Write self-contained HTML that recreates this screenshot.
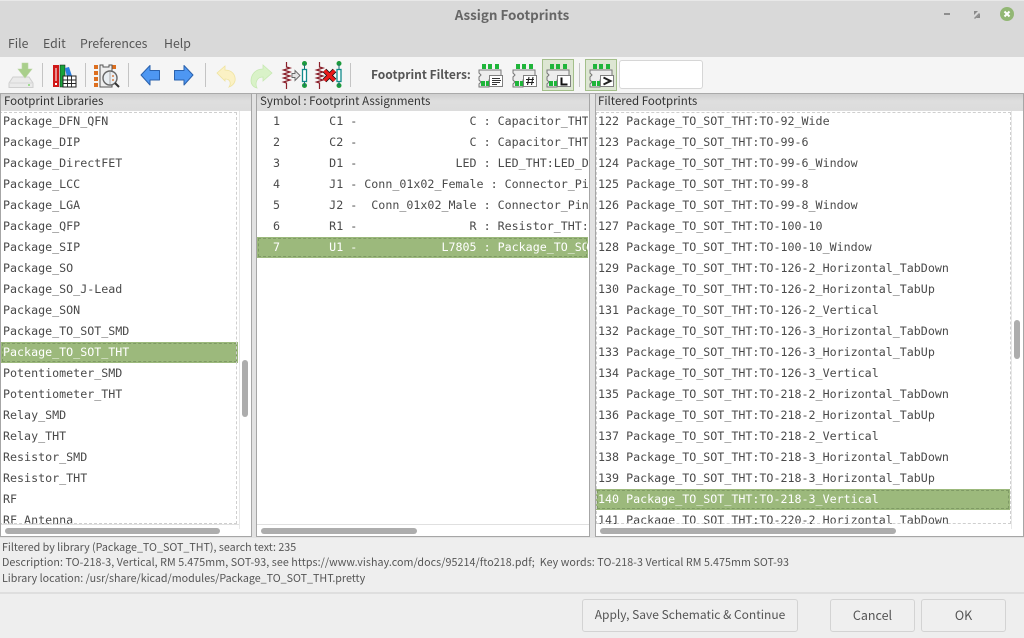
<!DOCTYPE html>
<html><head><meta charset="utf-8">
<style>
html,body{margin:0;padding:0;background:#eee;}
#r{position:relative;width:1024px;height:638px;overflow:hidden;background:#eeeeee;font-family:"Noto Sans CJK JP","Liberation Sans",sans-serif;color:#4d4d4d;}
.a{position:absolute;}
.t{position:absolute;white-space:pre;line-height:16px;}
.ui{font-size:12.3px;color:#555;}
.panel{position:absolute;top:94px;height:443px;background:#fff;border:1px solid #a6a6a6;border-top:0;box-sizing:border-box;overflow:hidden;}
.hd{position:absolute;left:0;right:0;top:0;height:17px;background:linear-gradient(#cfcfcf,#dedede 40%,#dcdcdc);font-size:11.5px;line-height:14px;color:#333;padding-left:3px;white-space:pre;}
.list{position:absolute;top:17px;left:0;height:413px;overflow:hidden;font-family:"DejaVu Sans Mono","Liberation Mono",monospace;font-size:11.67px;color:#4a4a4a;}
.row{position:absolute;left:0;right:0;height:21px;line-height:21px;white-space:pre;padding-left:2px;}
.sel{background:#9cb97c;color:#fff;}
.sel:after{content:"";position:absolute;left:1px;right:1px;top:1px;bottom:1px;border:1px dashed #7f9a65;}
.dash{position:absolute;border:1px dashed #cfcfcf;box-sizing:border-box;pointer-events:none;}
.sb{position:absolute;background:#adadad;border-radius:3px;}
.btn{position:absolute;top:599px;height:33px;border:1px solid #d3d3d3;border-radius:3px;background:#efefef;box-sizing:border-box;text-align:center;font-size:12.5px;line-height:29px;color:#555;}
.sep{position:absolute;top:63px;width:1px;height:24px;background:#c4c4c4;}
</style></head><body>
<div id="r">
<div class="a" style="left:0;top:0;width:1024px;height:57px;background:#d9d9d9;"></div>
<div class="a" style="left:0;top:0;width:1024px;height:1px;background:#e8e8e8;"></div>
<div class="t" style="left:0;width:1024px;text-align:center;top:6px;font-size:13.4px;font-weight:bold;color:#666;">Assign Footprints</div>
<svg class="a" style="left:940px;top:0" width="84" height="30" viewBox="0 0 84 30">
<rect x="4" y="13" width="6" height="2" fill="#8e8e8e"/>
<path d="M34 14v-3h3zM40 14l-5 5-1-1 5-5zM40 14v4h-3z" fill="#8e8e8e"/>
<path d="M34 11h4l-4 4zM40 18h-4l4-4z" fill="#8a8a8a"/>
<circle cx="67" cy="14" r="7" fill="#92b774"/>
<path d="M64.5 11.500l5 5M69.500 11.500l-5 5" stroke="#fff" stroke-width="2"/>
</svg>
<div class="t ui" style="left:8px;top:35px;">File</div>
<div class="t ui" style="left:43px;top:35px;">Edit</div>
<div class="t ui" style="left:80px;top:35px;">Preferences</div>
<div class="t ui" style="left:164px;top:35px;">Help</div>

<div class="a" style="left:0;top:57px;width:1024px;height:36px;background:#f5f5f5;"></div>
<div class="a" style="left:0;top:93px;width:1024px;height:1px;background:#aaa;"></div>
<div class="sep" style="left:42px"></div><div class="sep" style="left:85px"></div><div class="sep" style="left:128px"></div><div class="sep" style="left:205px"></div><div class="sep" style="left:350px"></div><div class="sep" style="left:579px"></div>

<div class="a" style="left:542px;top:59px;width:32px;height:32px;box-sizing:border-box;background:#dde6d3;border:1px solid #a3bf8a;"></div>
<div class="a" style="left:585px;top:59px;width:32px;height:32px;box-sizing:border-box;background:#dde6d3;border:1px solid #a3bf8a;"></div>
<div class="a" style="left:619px;top:60px;width:84px;height:29px;box-sizing:border-box;background:#fff;border:1px solid #d6d6d6;border-radius:3px;"></div>
<div class="t" style="left:371px;top:67px;font-size:12px;font-weight:bold;color:#555;">Footprint Filters:</div>

<svg class="a" style="left:0;top:57px" width="620" height="36" viewBox="0 57 620 36">
<defs>
<g id="fp">
<path d="M1 7h22v10H11v7H1v-3l2-2-2-2v-3l2-2-2-2z" fill="#ededed" stroke="#777" stroke-width="1"/>
<rect x="4" y="1" width="4" height="5" fill="#1fb53a"/><rect x="10" y="1" width="4" height="5" fill="#1fb53a"/><rect x="17" y="1" width="4" height="5" fill="#1fb53a"/>
<rect x="3" y="18" width="4" height="5" fill="#1fb53a"/><rect x="8" y="18" width="3" height="5" fill="#1fb53a"/>
<rect x="11.500" y="12.500" width="13" height="11" fill="#fff" stroke="#808080"/>
</g>
</defs>
<!-- save -->
<path d="M13 77l-4 6v4.500h24V83l-4-6z" fill="#eaeaea" stroke="#cfcfcf"/>
<path d="M10 83h22" stroke="#d5d5d5"/>
<rect x="28" y="84" width="2" height="2" fill="#9fdc90"/>
<path d="M23 63h6v6h4l-7 9-7-9h4z" fill="#a9cf8b" stroke="#b9d5a2" stroke-width=".6" transform="translate(-1,0)"/>
<!-- library -->
<rect x="53" y="65" width="6" height="22" fill="#d01818"/>
<rect x="55.500" y="68" width="1" height="13" fill="#fff"/><rect x="55" y="83" width="2" height="2" fill="#fff"/>
<rect x="60" y="65" width="5" height="22" fill="#19a33a" stroke="#111" stroke-width=".5"/>
<path d="M65 68l4-1 3 9-5 1z" fill="#2a7fe0"/>
<rect x="63" y="76" width="13" height="11" fill="#fff" stroke="#222"/>
<path d="M63 80h13M63 83.500h13M67.500 76v11M71.500 76v11" stroke="#222" stroke-width=".9"/>
<!-- netlist -->
<g fill="#dd6f1f"><rect x="94" y="65" width="4" height="4"/><rect x="94" y="71" width="4" height="4"/><rect x="94" y="77" width="4" height="4"/><rect x="94" y="83" width="4" height="4"/><rect x="112" y="65" width="4" height="4"/></g>
<path d="M100 65h3v2h6v-2h3v22h-12z" fill="#eee" stroke="#555"/>
<circle cx="110" cy="78" r="7" fill="#e9eef2" stroke="#666" stroke-width="1.400"/>
<path d="M110 72v12" stroke="#aaa"/>
<rect x="112" y="75" width="2" height="2" fill="#dd9a6f"/><rect x="112" y="79" width="2" height="2" fill="#dd9a6f"/>
<path d="M115 83l4 4" stroke="#333" stroke-width="2"/>
<!-- arrows -->
<path d="M141 75l9-9.500v5h9.500v9.500H150v5z" fill="#4e97f2" stroke="#2b62ad" stroke-linejoin="round"/>
<path d="M193 75l-9-9.500v5h-9.500v9.500H184v5z" fill="#4e97f2" stroke="#2b62ad" stroke-linejoin="round"/>
<!-- undo/redo -->
<path d="M217 73l8-7v4c7 0 11 5 10 11-1 3-3 5-6 6 2-3 2-8-4-8v2z" fill="#fbf1c4" stroke="#efe39f" stroke-width=".8"/>
<path d="M272 73l-9-8v4c-8 0-12 6-12 12 0 3 2 6 6 7-2-4-1-11 6-11v4z" fill="#d9f2c8" stroke="#c6e8b1" stroke-width=".8"/>
<!-- assign -->
<path d="M286.500 62v5l3.500 1-6.500 2 6.500 2-6.500 2 6.500 2-6.500 2 6.500 2-6.500 2 3 1v6" fill="none" stroke="#8a1f2a" stroke-width="1.200"/>
<path d="M292 73.500h3v-3l5 5-5 5v-3h-3z" fill="#e4e4e4" stroke="#666" stroke-width=".9"/>
<circle cx="304.500" cy="63.500" r="2.500" fill="#1c9a3c"/><circle cx="304.500" cy="85.500" r="2.500" fill="#1c9a3c"/>
<path d="M304.500 64v22" stroke="#1c6f6f"/>
<rect x="302.500" y="69.500" width="4" height="12" fill="#fff" stroke="#118a8a" stroke-width="1.300"/>
<!-- unassign -->
<path d="M319.500 62v5l3.500 1-6.500 2 6.500 2-6.500 2 6.500 2-6.500 2 6.500 2-6.500 2 3 1v6" fill="none" stroke="#8a1f2a" stroke-width="1.200"/>
<circle cx="339" cy="63.500" r="2.500" fill="#1c9a3c"/><circle cx="339" cy="85.500" r="2.500" fill="#1c9a3c"/>
<path d="M339 64v22" stroke="#1c6f6f"/>
<rect x="337" y="69.500" width="4" height="12" fill="#fff" stroke="#118a8a" stroke-width="1.300"/>
<path d="M324.500 70.500l10 10M334.500 70.500l-10 10" stroke="#111" stroke-width="5"/>
<path d="M324.500 70.500l10 10M334.500 70.500l-10 10" stroke="#ea1a1a" stroke-width="3.400"/>
<!-- fp filters -->
<g transform="translate(478,63)"><use href="#fp"/><path d="M14 15.500h8M14 17.500h9M14 19.500h8M14 21.500h5" stroke="#333" stroke-width=".9"/></g>
<g transform="translate(512,63)"><use href="#fp"/><path d="M15.500 22l1.500-8M19.500 22l1.500-8M14 16.500h8M14 19.500h8" stroke="#222" stroke-width="1.100" fill="none"/></g>
<g transform="translate(546,63)"><use href="#fp"/><path d="M15.500 14.500v7h6" stroke="#111" stroke-width="2" fill="none"/></g>
<g transform="translate(589,63)"><use href="#fp"/><path d="M14.500 14.500l7 3.500-7 3.500" stroke="#222" stroke-width="2" fill="none"/></g>
</svg>

<!-- splitter bg -->
<div class="a" style="left:0;top:94px;width:1024px;height:444px;background:#e2e2e2;"></div>

<!-- LEFT -->
<div class="panel" style="left:0;width:252px;">
<div class="hd">Footprint Libraries</div>
<div class="list" style="width:237px;">
<div class="row" style="top:0px;">Package_DFN_QFN</div>
<div class="row" style="top:21px;">Package_DIP</div>
<div class="row" style="top:42px;">Package_DirectFET</div>
<div class="row" style="top:63px;">Package_LCC</div>
<div class="row" style="top:84px;">Package_LGA</div>
<div class="row" style="top:105px;">Package_QFP</div>
<div class="row" style="top:126px;">Package_SIP</div>
<div class="row" style="top:147px;">Package_SO</div>
<div class="row" style="top:168px;">Package_SO_J-Lead</div>
<div class="row" style="top:189px;">Package_SON</div>
<div class="row" style="top:210px;">Package_TO_SOT_SMD</div>
<div class="row sel" style="top:231px;">Package_TO_SOT_THT</div>
<div class="row" style="top:252px;">Potentiometer_SMD</div>
<div class="row" style="top:273px;">Potentiometer_THT</div>
<div class="row" style="top:294px;">Relay_SMD</div>
<div class="row" style="top:315px;">Relay_THT</div>
<div class="row" style="top:336px;">Resistor_SMD</div>
<div class="row" style="top:357px;">Resistor_THT</div>
<div class="row" style="top:378px;">RF</div>
<div class="row" style="top:399px;">RF_Antenna</div>
</div>
<div class="dash" style="left:-2px;top:18px;width:238px;height:412px;"></div>
<div class="a" style="left:238px;top:17px;width:1px;height:418px;background:#e8e8e8;"></div>
<div class="a" style="left:0;top:430px;width:238px;height:1px;background:#e0e0e0;"></div>
<div class="sb" style="left:241px;top:266px;width:6px;height:57px;"></div>
<div class="sb" style="left:4px;top:434px;width:215px;height:6px;"></div>
</div>

<!-- MIDDLE -->
<div class="panel" style="left:256px;width:334px;">
<div class="hd">Symbol : Footprint Assignments</div>
<div class="list" style="width:331px;">
<div class="row" style="top:0px;">  1       C1 -                C : Capacitor_THT:C_Disc</div>
<div class="row" style="top:21px;">  2       C2 -                C : Capacitor_THT:C_Disc</div>
<div class="row" style="top:42px;">  3       D1 -              LED : LED_THT:LED_D5.0mm</div>
<div class="row" style="top:63px;">  4       J1 - Conn_01x02_Female : Connector_PinHeader</div>
<div class="row" style="top:84px;">  5       J2 -  Conn_01x02_Male : Connector_PinHeader</div>
<div class="row" style="top:105px;">  6       R1 -                R : Resistor_THT:R_Axial</div>
<div class="row sel" style="top:126px;">  7       U1 -            L7805 : Package_TO_SOT_THT:TO</div>
</div>
<div class="a" style="left:0;top:430px;width:334px;height:1px;background:#e0e0e0;"></div>
<div class="sb" style="left:4px;top:434px;width:156px;height:6px;"></div>
</div>

<!-- RIGHT -->
<div class="panel" style="left:595px;width:429px;">
<div class="hd" style="padding-left:2px;">Filtered Footprints</div>
<div class="list" style="width:414px;">
<div class="row" style="top:0px;">122 Package_TO_SOT_THT:TO-92_Wide</div>
<div class="row" style="top:21px;">123 Package_TO_SOT_THT:TO-99-6</div>
<div class="row" style="top:42px;">124 Package_TO_SOT_THT:TO-99-6_Window</div>
<div class="row" style="top:63px;">125 Package_TO_SOT_THT:TO-99-8</div>
<div class="row" style="top:84px;">126 Package_TO_SOT_THT:TO-99-8_Window</div>
<div class="row" style="top:105px;">127 Package_TO_SOT_THT:TO-100-10</div>
<div class="row" style="top:126px;">128 Package_TO_SOT_THT:TO-100-10_Window</div>
<div class="row" style="top:147px;">129 Package_TO_SOT_THT:TO-126-2_Horizontal_TabDown</div>
<div class="row" style="top:168px;">130 Package_TO_SOT_THT:TO-126-2_Horizontal_TabUp</div>
<div class="row" style="top:189px;">131 Package_TO_SOT_THT:TO-126-2_Vertical</div>
<div class="row" style="top:210px;">132 Package_TO_SOT_THT:TO-126-3_Horizontal_TabDown</div>
<div class="row" style="top:231px;">133 Package_TO_SOT_THT:TO-126-3_Horizontal_TabUp</div>
<div class="row" style="top:252px;">134 Package_TO_SOT_THT:TO-126-3_Vertical</div>
<div class="row" style="top:273px;">135 Package_TO_SOT_THT:TO-218-2_Horizontal_TabDown</div>
<div class="row" style="top:294px;">136 Package_TO_SOT_THT:TO-218-2_Horizontal_TabUp</div>
<div class="row" style="top:315px;">137 Package_TO_SOT_THT:TO-218-2_Vertical</div>
<div class="row" style="top:336px;">138 Package_TO_SOT_THT:TO-218-3_Horizontal_TabDown</div>
<div class="row" style="top:357px;">139 Package_TO_SOT_THT:TO-218-3_Horizontal_TabUp</div>
<div class="row sel" style="top:378px;">140 Package_TO_SOT_THT:TO-218-3_Vertical</div>
<div class="row" style="top:399px;">141 Package_TO_SOT_THT:TO-220-2_Horizontal_TabDown</div>
</div>
<div class="dash" style="left:0;top:18px;width:415px;height:412px;"></div>
<div class="a" style="left:415px;top:17px;width:1px;height:418px;background:#e8e8e8;"></div>
<div class="sb" style="left:418px;top:226px;width:6px;height:39px;"></div>
<div class="sb" style="left:4px;top:434px;width:296px;height:6px;"></div>
</div>

<!-- status -->
<div class="t" style="left:2px;top:540px;font-size:10.7px;color:#555;">Filtered by library (Package_TO_SOT_THT), search text: 235</div>
<div class="t" style="left:2px;top:555px;font-size:10.7px;letter-spacing:.07px;color:#555;">Description: TO-218-3, Vertical, RM 5.475mm, SOT-93, see https://www.vishay.com/docs/95214/fto218.pdf;  Key words: TO-218-3 Vertical RM 5.475mm SOT-93</div>
<div class="t" style="left:2px;top:571px;font-size:10.7px;color:#555;">Library location: /usr/share/kicad/modules/Package_TO_SOT_THT.pretty</div>
<div class="a" style="left:0;top:592px;width:1024px;height:2px;background:#dedede;"></div>
<div class="btn" style="left:582px;width:216px;font-size:12px;">Apply, Save Schematic &amp; Continue</div>
<div class="btn" style="left:830px;width:85px;">Cancel</div>
<div class="btn" style="left:921px;width:85px;">OK</div>
</div>
</body></html>
